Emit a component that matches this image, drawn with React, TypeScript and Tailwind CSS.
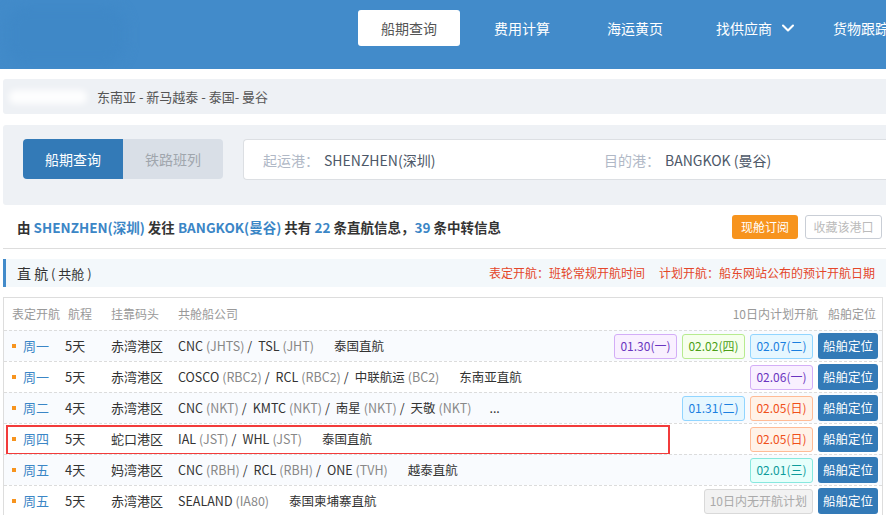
import React from "react";
import { ChevronDown } from "lucide-react";

type Tag = { text: string; c: string };

const tagCls: Record<string, string> = {
  purple: "border-[#d3adf7] bg-[#f9f0ff] text-[#6a35c0]",
  green: "border-[#b7eb8f] bg-[#f6ffed] text-[#4c9f17]",
  blue: "border-[#91d5ff] bg-[#e6f7ff] text-[#1a7fe0]",
  orange: "border-[#ffbb96] bg-[#fff2e8] text-[#f0501a]",
  cyan: "border-[#87e8de] bg-[#e6fffb] text-[#0e9c9c]",
  gray: "border-[#d9d9d9] bg-[#f2f2f2] text-[#aaaaaa]",
};

type Co = { n: string; code?: string };
type Row = {
  day: string;
  dur: string;
  term: string;
  cos: Co[];
  route: string;
  tags: Tag[];
  hl?: boolean;
};

const rows: Row[] = [
  {
    day: "周一",
    dur: "5天",
    term: "赤湾港区",
    cos: [
      { n: "CNC", code: "(JHTS)" },
      { n: "TSL", code: "(JHT)" },
    ],
    route: "泰国直航",
    tags: [
      { text: "01.30(一)", c: "purple" },
      { text: "02.02(四)", c: "green" },
      { text: "02.07(二)", c: "blue" },
    ],
  },
  {
    day: "周一",
    dur: "5天",
    term: "赤湾港区",
    cos: [
      { n: "COSCO", code: "(RBC2)" },
      { n: "RCL", code: "(RBC2)" },
      { n: "中联航运", code: "(BC2)" },
    ],
    route: "东南亚直航",
    tags: [{ text: "02.06(一)", c: "purple" }],
  },
  {
    day: "周二",
    dur: "4天",
    term: "赤湾港区",
    cos: [
      { n: "CNC", code: "(NKT)" },
      { n: "KMTC", code: "(NKT)" },
      { n: "南星", code: "(NKT)" },
      { n: "天敬", code: "(NKT)" },
    ],
    route: "...",
    tags: [
      { text: "01.31(二)", c: "blue" },
      { text: "02.05(日)", c: "orange" },
    ],
  },
  {
    day: "周四",
    dur: "5天",
    term: "蛇口港区",
    cos: [
      { n: "IAL", code: "(JST)" },
      { n: "WHL", code: "(JST)" },
    ],
    route: "泰国直航",
    tags: [{ text: "02.05(日)", c: "orange" }],
    hl: true,
  },
  {
    day: "周五",
    dur: "4天",
    term: "妈湾港区",
    cos: [
      { n: "CNC", code: "(RBH)" },
      { n: "RCL", code: "(RBH)" },
      { n: "ONE", code: "(TVH)" },
    ],
    route: "越泰直航",
    tags: [{ text: "02.01(三)", c: "cyan" }],
  },
  {
    day: "周五",
    dur: "5天",
    term: "赤湾港区",
    cos: [{ n: "SEALAND", code: "(IA80)" }],
    route: "泰国柬埔寨直航",
    tags: [{ text: "10日内无开航计划", c: "gray" }],
  },
];

const font = {
  fontFamily: '"Noto Sans CJK SC", "Noto Sans", "Liberation Sans", sans-serif',
};

export default function App() {
  return (
    <div className="w-[886px] h-[515px] overflow-hidden bg-white text-[#333]" style={font}>
      {/* Header */}
      <div className="relative h-[69px] bg-[#428bca] flex overflow-hidden">
        <div className="absolute left-[6px] top-[6px] w-[120px] h-[58px] rounded-[20px] bg-[#3f88c7] blur-[6px]" />
        <div className="flex pl-[358px] pt-[10px] gap-[11px]">
          <div className="w-[102px] h-[36px] rounded-[3px] bg-white flex items-center justify-center text-[14px] leading-[20px] text-[#555]">
            船期查询
          </div>
          <div className="w-[102px] h-[36px] flex items-center justify-center text-[14px] leading-[20px] text-white">
            费用计算
          </div>
          <div className="w-[102px] h-[36px] flex items-center justify-center text-[14px] leading-[20px] text-white">
            海运黄页
          </div>
          <div className="w-[102px] h-[36px] flex items-center justify-center text-[14px] leading-[20px] text-white pl-[18px]">
            找供应商
            <ChevronDown className="ml-[6px]" size={20} strokeWidth={2.5} color="white" />
          </div>
          <div className="w-[102px] h-[36px] flex items-center justify-center text-[14px] leading-[20px] text-white whitespace-nowrap">
            货物跟踪
          </div>
        </div>
      </div>

      <div className="pl-[3px]">
        {/* Breadcrumb */}
        <div className="mt-[10px] h-[35px] bg-[#eef1f5] rounded-l-[3px] flex items-center">
          <div className="ml-[6px] w-[78px] h-[14px] rounded-[6px] bg-white/90 blur-[3px]" />
          <div className="ml-[10px] text-[13px] leading-[18px] text-[#555]">东南亚 - 新马越泰 - 泰国- 曼谷</div>
        </div>

        {/* Search panel */}
        <div className="mt-[11px] h-[80px] bg-[#eef1f5] rounded-l-[3px] pt-[14px] pl-[20px] flex">
          <div className="flex h-[40px]">
            <div className="w-[100px] bg-[#337ab7] rounded-l-[4px] flex items-center justify-center text-white text-[14px] leading-[20px]">
              船期查询
            </div>
            <div className="w-[100px] bg-[#d9dfe7] rounded-r-[4px] flex items-center justify-center text-[#a0a6ad] text-[14px] leading-[20px]">
              铁路班列
            </div>
          </div>
          <div className="ml-[20px] flex-1 h-[41px] bg-white border border-[#dcdfe3] border-r-0 rounded-l-[4px] flex items-center text-[14px] leading-[20px]">
            <div className="w-[360px] pl-[19px] flex">
              <span className="text-[#b0b8c6]">起运港：</span>
              <span className="ml-[5px] text-[#4d5868]">SHENZHEN(深圳)</span>
            </div>
            <div className="flex">
              <span className="text-[#b0b8c6]">目的港：</span>
              <span className="ml-[5px] text-[#4d5868]">BANGKOK (曼谷)</span>
            </div>
          </div>
        </div>

        {/* Summary */}
        <div className="h-[44px] flex items-center pl-[14px] pr-[4px] border-b border-[#dddddd]">
          <div className="flex-1 text-[13.5px] leading-[18px] font-bold text-[#333]">
            由 <span className="text-[#3b86c6]">SHENZHEN(深圳)</span> 发往{" "}
            <span className="text-[#3b86c6]">BANGKOK(曼谷)</span> 共有{" "}
            <span className="text-[#3b86c6]">22</span> 条直航信息，<span className="text-[#3b86c6]">39</span> 条中转信息
          </div>
          <div className="w-[66px] h-[24px] rounded-[3px] bg-[#f7941e] text-white text-[12px] leading-[16px] flex items-center justify-center">
            现舱订阅
          </div>
          <div className="ml-[7px] w-[77px] h-[24px] rounded-[3px] border border-[#c9ced6] text-[#bbbbbb] text-[12px] leading-[16px] flex items-center justify-center">
            收藏该港口
          </div>
        </div>

        {/* Section header */}
        <div className="mt-[10px] h-[28px] bg-[#f3f8fb] border-l-[3px] border-[#428bca] flex items-center pl-[11px] pr-[11px]">
          <div className="flex-1 text-[14px] leading-[20px] text-[#333]">
            直 航<span className="text-[13px]"> ( 共舱 )</span>
          </div>
          <div className="text-[12px] leading-[16px] text-[#e4462a] flex gap-[14px]">
            <span>表定开航：班轮常规开航时间</span>
            <span>计划开航：船东网站公布的预计开航日期</span>
          </div>
        </div>

        {/* Table */}
        <div className="mt-[10px] mr-[3px] border border-[#dddddd] text-[12px] leading-[16px]">
          <div className="h-[32px] flex items-center text-[#999]">
            <div className="w-[61px] pl-[8px] whitespace-nowrap">表定开航</div>
            <div className="w-[46px] pl-[3px]">航程</div>
            <div className="w-[67px]">挂靠码头</div>
            <div className="flex-1">共舱船公司</div>
            <div>10日内计划开航</div>
            <div className="w-[64px] pl-[10px]">船舶定位</div>
          </div>
          {rows.map((r, i) => (
            <div
              key={i}
              className={`relative h-[31px] flex items-center border-t border-dashed border-[#dcdcdc] ${
                i % 2 === 0 ? "bg-[#f9fbfe]" : "bg-white"
              }`}
            >
              {r.hl && (
                <div className="absolute left-[2px] top-[1px] w-[664px] h-[30px] border-2 border-[#f23b3b]" />
              )}
              <div className="w-[61px] pl-[8px] flex items-center">
                <span className="w-[4px] h-[4px] bg-[#f7941e]" />
                <span className="ml-[7px] text-[#3b86c6] text-[13px]">{r.day}</span>
              </div>
              <div className="w-[46px] text-[13px]">{r.dur}</div>
              <div className="w-[67px] text-[13px]">{r.term}</div>
              <div className="flex-1 flex items-center whitespace-nowrap text-[12.5px]">
                {r.cos.map((c, j) => (
                  <React.Fragment key={j}>
                    <span className="text-[#333]">{c.n}</span>
                    {c.code && <span className="ml-[3px] text-[#888]">{c.code}</span>}
                    {j < r.cos.length - 1 && <span className="ml-[3px] mr-[6px] text-[#333]">/</span>}
                  </React.Fragment>
                ))}
                <span className={`${r.route === "..." ? "ml-[18px]" : "ml-[20px]"} text-[12.5px]`}>{r.route}</span>
              </div>
              <div className="flex gap-[5px] items-center">
                {r.tags.map((t, k) => (
                  <div
                    key={k}
                    className={`h-[25px] rounded-[3px] border flex items-center text-[12px] ${tagCls[t.c]} ${
                      t.c === "gray" ? "px-[5px]" : "w-[63px] justify-center"
                    }`}
                  >
                    {t.text}
                  </div>
                ))}
                <div className="mr-[4px] w-[60px] h-[26px] rounded-[3px] bg-[#337ab7] text-white text-[12.5px] flex items-center justify-center">
                  船舶定位
                </div>
              </div>
            </div>
          ))}
        </div>
      </div>
    </div>
  );
}
